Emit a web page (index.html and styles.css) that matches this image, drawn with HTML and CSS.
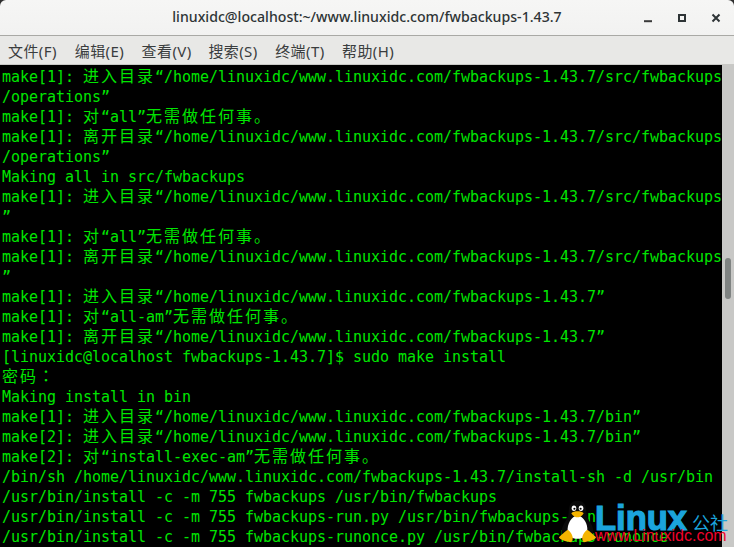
FILE: index.html
```html
<!DOCTYPE html>
<html lang="zh">
<head>
<meta charset="utf-8">
<title>linuxidc@localhost</title>
<link rel="stylesheet" href="styles.css">
</head>
<body>
<div class="window">
  <header class="titlebar">
    <div class="title">linuxidc@localhost:~/www.linuxidc.com/fwbackups-1.43.7</div>
    <div class="controls">
      <svg class="ctl" viewBox="0 0 16 16"><rect x="4" y="10.2" width="8" height="2" fill="#3a3a3a"/></svg>
      <svg class="ctl" viewBox="0 0 16 16"><rect x="5" y="5" width="6" height="6" fill="none" stroke="#2e3436" stroke-width="2"/></svg>
      <svg class="ctl" viewBox="0 0 16 16"><path d="M4.5 4.5L11.5 11.5M11.5 4.5L4.5 11.5" stroke="#2e3436" stroke-width="2" fill="none"/></svg>
    </div>
  </header>
  <nav class="menubar">
    <span class="menu">文件(F)</span>
    <span class="menu">编辑(E)</span>
    <span class="menu">查看(V)</span>
    <span class="menu">搜索(S)</span>
    <span class="menu">终端(T)</span>
    <span class="menu">帮助(H)</span>
  </nav>
  <main class="term">
    <div class="screen">
      <div class="ln">make[1]: <span class="w">进入目录</span>“/home/linuxidc/www.linuxidc.com/fwbackups-1.43.7/src/fwbackups</div>
      <div class="ln">/operations”</div>
      <div class="ln">make[1]: <span class="w">对</span>“all”<span class="w">无需做任何事。</span></div>
      <div class="ln">make[1]: <span class="w">离开目录</span>“/home/linuxidc/www.linuxidc.com/fwbackups-1.43.7/src/fwbackups</div>
      <div class="ln">/operations”</div>
      <div class="ln">Making all in src/fwbackups</div>
      <div class="ln">make[1]: <span class="w">进入目录</span>“/home/linuxidc/www.linuxidc.com/fwbackups-1.43.7/src/fwbackups</div>
      <div class="ln">”</div>
      <div class="ln">make[1]: <span class="w">对</span>“all”<span class="w">无需做任何事。</span></div>
      <div class="ln">make[1]: <span class="w">离开目录</span>“/home/linuxidc/www.linuxidc.com/fwbackups-1.43.7/src/fwbackups</div>
      <div class="ln">”</div>
      <div class="ln">make[1]: <span class="w">进入目录</span>“/home/linuxidc/www.linuxidc.com/fwbackups-1.43.7”</div>
      <div class="ln">make[1]: <span class="w">对</span>“all-am”<span class="w">无需做任何事。</span></div>
      <div class="ln">make[1]: <span class="w">离开目录</span>“/home/linuxidc/www.linuxidc.com/fwbackups-1.43.7”</div>
      <div class="ln">[linuxidc@localhost fwbackups-1.43.7]$ sudo make install</div>
      <div class="ln"><span class="w">密码</span><span class="w tc" lang="zh-TW">：</span></div>
      <div class="ln">Making install in bin</div>
      <div class="ln">make[1]: <span class="w">进入目录</span>“/home/linuxidc/www.linuxidc.com/fwbackups-1.43.7/bin”</div>
      <div class="ln">make[2]: <span class="w">进入目录</span>“/home/linuxidc/www.linuxidc.com/fwbackups-1.43.7/bin”</div>
      <div class="ln">make[2]: <span class="w">对</span>“install-exec-am”<span class="w">无需做任何事。</span></div>
      <div class="ln">/bin/sh /home/linuxidc/www.linuxidc.com/fwbackups-1.43.7/install-sh -d /usr/bin</div>
      <div class="ln">/usr/bin/install -c -m 755 fwbackups /usr/bin/fwbackups</div>
      <div class="ln">/usr/bin/install -c -m 755 fwbackups-run.py /usr/bin/fwbackups-run</div>
      <div class="ln">/usr/bin/install -c -m 755 fwbackups-runonce.py /usr/bin/fwbackups-runonce</div>
    </div>
    <div class="scrollbar"><div class="thumb"></div></div>
  </main>
  <div class="watermark">
    <svg class="tux" viewBox="0 0 44 52" preserveAspectRatio="none">
      <path d="M22 1C14 1 12 8 12 15C12 20 10 23 7 28C4 34 3 40 6 44L38 44C41 40 40 33 37 28C34 23 32 20 32 15C32 8 30 1 22 1Z" fill="#0a0a0a"/>
      <path d="M22 18C15 20 10 29 11 38C12 44 17 47 22 47C28 47 33 44 33 37C34 29 29 20 22 18Z" fill="#fff"/>
      <ellipse cx="18" cy="10" rx="2.6" ry="3.2" fill="#fff"/>
      <ellipse cx="26" cy="10" rx="2.6" ry="3.2" fill="#fff"/>
      <circle cx="18.5" cy="10.5" r="1.2" fill="#000"/>
      <circle cx="25.5" cy="10.5" r="1.2" fill="#000"/>
      <path d="M15 16C18 13 26 13 29 16C27 20 24 21 22 21C20 21 17 20 15 16Z" fill="#f5b400"/>
      <path d="M11 36C8 38 4 42 1 45C3 49 10 50 15 51C18 48 17 41 11 36Z" fill="#f5b400"/>
      <path d="M33 36C36 38 40 42 43 45C41 49 34 50 29 51C26 48 27 41 33 36Z" fill="#f5b400"/>
    </svg>
    <div class="brand"><span class="linux">Linux</span><span class="gs">公社</span></div>
    <div class="url">www.Linuxidc.com</div>
  </div>
</div>
</body>
</html>
```
FILE: styles.css
```css
* { box-sizing: border-box; }
html, body { margin: 0; padding: 0; }
body { width: 734px; height: 547px; overflow: hidden; background: #2e2e2e; }
.window { position: relative; width: 734px; height: 547px; display: flex; flex-direction: column; overflow: hidden; }
.titlebar {
  height: 36px; flex: none; position: relative;
  display: flex; align-items: center; justify-content: center;
  background: linear-gradient(#f6f6f5, #f2f2f1);
  border-bottom: 1px solid #a9a9a5;
  border-radius: 6px 6px 0 0;
}
.title { font: 500 14.15px "Noto Sans", "Open Sans", sans-serif; color: #2e3436; padding-bottom: 2px; }
.controls { position: absolute; right: 10px; top: 10px; display: flex; gap: 18px; }
.ctl { width: 16px; height: 16px; display: block; }
.menubar {
  height: 29px; flex: none; display: flex; gap: 15.8px; align-items: center;
  padding: 0 0 0 8px; background: #e8e8e6; border-bottom: 1px solid #c9c9c6;
}
.menu { font: 15px "Noto Sans", "Noto Sans CJK SC", sans-serif; color: #3a3d3e; width: 51px; white-space: nowrap; letter-spacing: 0.4px; }
.term { flex: 1; display: flex; min-height: 0; background: #000; }
.screen { width: 722px; flex: none; padding: 2px 0 0 2px; overflow: hidden; }
.ln { height: 20px; white-space: pre; color: #00e600; font: 15px/20px "DejaVu Sans Mono", monospace; letter-spacing: -0.03px; }
.w { font-family: "Noto Sans CJK SC", sans-serif; font-size: 16px; letter-spacing: 2px; line-height: 16px; }
.tc { font-family: "Noto Sans CJK TC", sans-serif; }
.scrollbar { flex: 1; background: #c8c8c6; padding: 193px 3px 0 3px; }
.thumb { height: 41px; background: #7f8382; border-radius: 3px; }
.watermark { position: absolute; left: 558px; top: 499px; width: 176px; height: 48px; }
.tux { position: absolute; left: 0; top: 1px; width: 39px; height: 43px; }
.brand { position: absolute; left: 37px; top: 0; display: flex; align-items: baseline; white-space: nowrap; }
.linux { font: 900 34.5px/38px "Liberation Sans", sans-serif; color: #1ba4dc; -webkit-text-stroke: 1.2px #1ba4dc; }
.gs { font: 18px/20px "Noto Sans CJK SC", sans-serif; color: #1ba4dc; margin-left: 5px; }
.url { position: absolute; left: 37px; top: 27px; font: 16px/20px "Liberation Sans", sans-serif; color: #f0032d; white-space: nowrap; }
```
